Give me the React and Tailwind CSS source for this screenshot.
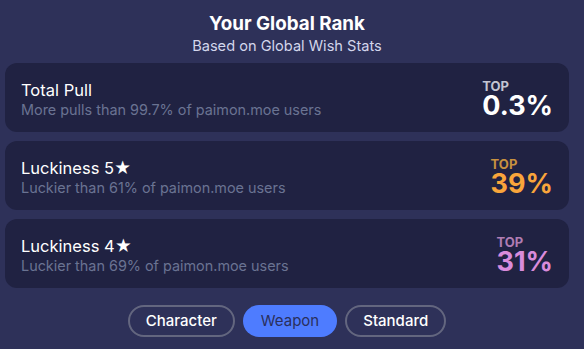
const FONT = { fontFamily: 'Inter, "Noto Sans", sans-serif' }

const stats = [
  {
    title: 'Total Pull',
    desc: 'More pulls than 99.7% of paimon.moe users',
    value: '0.3%',
    top: 'text-[#c4c5d2]',
    num: 'text-white',
  },
  {
    title: 'Luckiness 5★',
    desc: 'Luckier than 61% of paimon.moe users',
    value: '39%',
    top: 'text-[#c8913f]',
    num: 'text-[#f9a53b]',
  },
  {
    title: 'Luckiness 4★',
    desc: 'Luckier than 69% of paimon.moe users',
    value: '31%',
    top: 'text-[#b07db3]',
    num: 'text-[#d98bdb]',
  },
]

function StatCard({ title, desc, value, top, num }) {
  return (
    <div className="flex h-[69px] items-center justify-between rounded-xl bg-[#202242] pl-4 pr-4 pt-1">
      <div className="flex flex-col">
        <span className="text-[16.5px] leading-5 text-white">{title}</span>
        <span className="text-[14.4px] leading-[19px] text-[#6a7392]">{desc}</span>
      </div>
      <div className="flex flex-col items-start">
        <span className={`text-[13px] font-bold leading-[12px] ${top}`}>TOP</span>
        <span className={`text-[27px] font-bold leading-none ${num}`}>{value}</span>
      </div>
    </div>
  )
}

export default function App() {
  return (
    <div className="h-[349px] w-full bg-[#2e3159]" style={FONT}>
      <div className="flex w-[569px] flex-col pl-[5px] pt-3">
        <div className="flex flex-col items-center">
          <h1 className="text-[18.8px] font-bold leading-6 text-white">Your Global Rank</h1>
          <p className="text-[14.6px] leading-5 text-[#d3d6ec]">Based on Global Wish Stats</p>
        </div>
        <div className="mt-[7px] flex flex-col gap-[9px]">
          {stats.map(s => (
            <StatCard key={s.title} {...s} />
          ))}
        </div>
        <div className="mt-[17px] flex justify-center gap-2">
          <button className="h-8 rounded-full border-2 border-[#63667f] px-[16px] text-[15px] font-medium text-white">
            Character
          </button>
          <button className="h-8 rounded-full bg-[#4e7cff] px-[18px] text-[15px] text-[#2a2f5c]">
            Weapon
          </button>
          <button className="h-8 rounded-full border-2 border-[#63667f] px-[16px] text-[15px] font-medium text-white">
            Standard
          </button>
        </div>
      </div>
    </div>
  )
}
